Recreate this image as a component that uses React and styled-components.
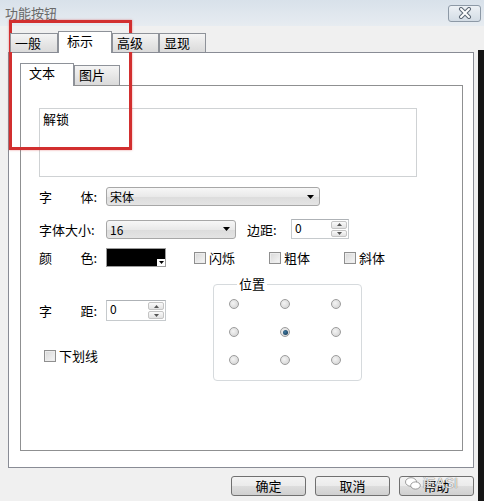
import React from "react";
import styled, { createGlobalStyle } from "styled-components";

const GlobalStyle = createGlobalStyle`
  html, body {
    margin: 0;
    padding: 0;
    background: #f0f0f0;
  }
  body {
    font-family: "Noto Sans CJK SC", "DejaVu Sans", sans-serif;
    font-size: 13px;
    color: #000;
  }
`;

const Window = styled.div`
  position: relative;
  width: 484px;
  height: 501px;
  overflow: hidden;
  display: flex;
  flex-direction: column;
  background: #f0f0f0;
`;

const TitleBar = styled.div`
  flex: none;
  height: 26px;
  box-sizing: border-box;
  display: flex;
  align-items: center;
  justify-content: space-between;
  padding: 0 3px 0 5px;
  background: linear-gradient(#d8e1ea, #e7ecf1);
  color: #6a6a6a;
`;

const Title = styled.span`
  font-size: 13px;
  line-height: 14px;
`;

const CloseButton = styled.div`
  width: 33px;
  height: 17px;
  box-sizing: border-box;
  border: 1px solid #8d99a6;
  border-radius: 3px;
  background: linear-gradient(#edf1f5, #d3dce5);
  display: flex;
  align-items: center;
  justify-content: center;
`;

const Body = styled.div`
  flex: 1;
  display: flex;
`;

const Main = styled.div`
  width: 478px;
  box-sizing: border-box;
  padding: 5px 4px 0 8px;
  display: flex;
  flex-direction: column;
`;

const Edge = styled.div`
  width: 6px;
  margin-top: 24px;
  background: #151515;
`;

const TabRow = styled.div`
  display: flex;
  align-items: flex-end;
  height: ${(p) => p.$h}px;
  padding-left: ${(p) => p.$pl}px;
`;

const Tab = styled.div`
  position: relative;
  z-index: ${(p) => (p.$active ? 2 : 1)};
  width: ${(p) => p.$w}px;
  height: ${(p) => (p.$active ? p.$h + 1 : p.$h - 2)}px;
  margin-bottom: ${(p) => (p.$active ? -1 : 0)}px;
  box-sizing: border-box;
  padding-left: ${(p) => (p.$active ? 8 : 4)}px;
  border: 1px solid #8e9299;
  border-bottom: none;
  background: ${(p) => (p.$active ? "#fff" : "linear-gradient(#f4f4f4, #dadada)")};
  line-height: ${(p) => (p.$active ? 18 : 17)}px;
  font-size: 13px;
`;

const OuterPanel = styled.div`
  width: 466px;
  height: 416px;
  box-sizing: border-box;
  border: 1px solid #898c95;
  background: #fff;
  padding: 10px 0 0 11px;
`;

const InnerPanel = styled.div`
  width: 443px;
  height: 366px;
  box-sizing: border-box;
  border: 1px solid #8f9091;
  background: #fff;
  padding: 22px 0 0 18px;
`;

const TextBox = styled.div`
  width: 378px;
  height: 69px;
  box-sizing: border-box;
  border: 1px solid #cfd2d4;
  padding: 2px 3px;
  line-height: 16px;
`;

const FormRow = styled.div`
  display: flex;
  align-items: center;
  margin-top: ${(p) => p.$mt}px;
`;

const Label = styled.div`
  width: ${(p) => p.$w || 58}px;
  display: flex;
  justify-content: space-between;
  white-space: nowrap;
  margin-left: ${(p) => p.$ml || 0}px;
`;

const Select = styled.div`
  width: ${(p) => p.$w}px;
  height: 19px;
  margin-left: 9px;
  box-sizing: border-box;
  border: 1px solid #a7a7a7;
  border-radius: 3px;
  background: linear-gradient(#f7f7f7, #e9e9e9 50%, #dcdcdc 51%, #e4e4e4);
  display: flex;
  align-items: center;
  justify-content: space-between;
  padding: 0 5px 0 3px;
  font-size: 12px;
`;

const Spin = styled.div`
  width: ${(p) => p.$w}px;
  height: ${(p) => p.$h}px;
  margin-left: ${(p) => p.$ml}px;
  box-sizing: border-box;
  border: 1px solid #c6cacd;
  border-top-color: #aeb2b6;
  background: #fff;
  display: flex;
`;

const SpinValue = styled.div`
  flex: 1;
  padding-left: 3px;
  font-size: 12px;
  line-height: 15px;
`;

const SpinButtons = styled.div`
  width: 16px;
  display: flex;
  flex-direction: column;
  padding: 1px;
  gap: 1px;
`;

const SpinBtn = styled.div`
  flex: 1;
  border: 1px solid #c4c4c4;
  border-radius: 2px;
  background: linear-gradient(#fafafa, #e2e2e2);
  display: flex;
  align-items: center;
  justify-content: center;
`;

const Swatch = styled.div`
  position: relative;
  width: 60px;
  height: 19px;
  margin-left: 9px;
  box-sizing: border-box;
  border: 1px solid #9c9c9c;
  background: #000;
`;

const SwatchArrow = styled.div`
  position: absolute;
  right: 0;
  bottom: 0;
  width: 8px;
  height: 7px;
  background: #fff;
  display: flex;
  align-items: center;
  justify-content: center;
`;

const CheckItem = styled.div`
  display: flex;
  align-items: center;
  gap: 3px;
  width: ${(p) => p.$w || "auto"};
  margin-left: ${(p) => p.$ml || 0}px;
  margin-top: ${(p) => p.$mt || 0}px;
`;

const Box = styled.span`
  width: 12px;
  height: 12px;
  box-sizing: border-box;
  border: 1px solid #8f8f8f;
  background: linear-gradient(135deg, #d7d7d7, #f6f6f6);
  box-shadow: inset 0 0 0 1px #ececec;
`;

const Lower = styled.div`
  display: flex;
  align-items: flex-start;
  margin-top: 10px;
`;

const LeftCol = styled.div`
  width: 174px;
  padding-top: 23px;
`;

const Group = styled.fieldset`
  width: 149px;
  height: 104px;
  box-sizing: border-box;
  margin: 0;
  padding: 8px 0 0 15px;
  border: 1px solid #d6dadd;
  border-radius: 4px;
`;

const Legend = styled.legend`
  margin-left: 8px;
  padding: 0 2px;
  line-height: 14px;
  font-size: 13px;
`;

const RadioGrid = styled.div`
  display: grid;
  grid-template-columns: repeat(3, 10px);
  column-gap: 41px;
  row-gap: 18px;
`;

const Radio = styled.span`
  width: 10px;
  height: 10px;
  box-sizing: border-box;
  border-radius: 50%;
  border: 1px solid #9c9c9c;
  background: radial-gradient(circle at 40% 40%, #f4f4f4, #cfcfcf);
  display: flex;
  align-items: center;
  justify-content: center;
  &::after {
    content: "";
    display: ${(p) => (p.$on ? "block" : "none")};
    width: 5px;
    height: 5px;
    border-radius: 50%;
    background: radial-gradient(circle at 40% 40%, #3f7aa3, #0f2f48);
  }
`;

const ButtonRow = styled.div`
  display: flex;
  justify-content: flex-end;
  gap: 9px;
  margin-top: 8px;
`;

const Button = styled.div`
  width: 75px;
  height: 20px;
  box-sizing: border-box;
  border: 1px solid #707070;
  border-radius: 3px;
  background: linear-gradient(#f3f3f3, #ebebeb 50%, #dddddd 51%, #d0d0d0);
  text-align: center;
  line-height: 17px;
  font-size: 13px;
`;

const Highlight = styled.div`
  position: absolute;
  left: 9px;
  top: 20px;
  width: 123px;
  height: 130px;
  box-sizing: border-box;
  border: 3px solid #d22f2f;
  box-shadow: 0 0 2px rgba(210, 40, 40, 0.5);
  pointer-events: none;
`;

const Watermark = styled.div`
  position: absolute;
  left: 405px;
  top: 475px;
  display: flex;
  align-items: center;
  gap: 2px;
  color: rgba(255, 255, 255, 0.85);
  font-family: "Liberation Sans", sans-serif;
  font-size: 14px;
  text-shadow: 0 0 1px #777, 0 0 1px #777;
  pointer-events: none;
`;

const Down = () => (
  <svg width="7" height="4" viewBox="0 0 7 4">
    <path d="M0 0h7L3.5 4z" fill="#000" />
  </svg>
);

const Tiny = ({ up }) => (
  <svg width="5" height="3" viewBox="0 0 5 3">
    <path d={up ? "M0 3h5L2.5 0z" : "M0 0h5L2.5 3z"} fill="#555" />
  </svg>
);

function SpinBox({ w, h, ml }) {
  return (
    <Spin $w={w} $h={h} $ml={ml}>
      <SpinValue>0</SpinValue>
      <SpinButtons>
        <SpinBtn><Tiny up /></SpinBtn>
        <SpinBtn><Tiny /></SpinBtn>
      </SpinButtons>
    </Spin>
  );
}

const outerTabs = [
  { t: "一般", w: 48 },
  { t: "标示", w: 54, active: true },
  { t: "高级", w: 47 },
  { t: "显现", w: 47 },
];

export default function App() {
  return (
    <Window>
      <GlobalStyle />
      <TitleBar>
        <Title>功能按钮</Title>
        <CloseButton>
          <svg width="16" height="12" viewBox="0 0 16 12">
            <path d="M4 2l8 8M12 2l-8 8" stroke="#5d6875" strokeWidth="4" strokeLinecap="round" />
            <path d="M4 2l8 8M12 2l-8 8" stroke="#fff" strokeWidth="2" strokeLinecap="round" />
          </svg>
        </CloseButton>
      </TitleBar>
      <Body>
        <Main>
          <TabRow $h={21} $pl={2}>
            {outerTabs.map((tab) => (
              <Tab key={tab.t} $w={tab.w} $h={21} $active={tab.active}>
                {tab.t}
              </Tab>
            ))}
          </TabRow>
          <OuterPanel>
            <TabRow $h={22} $pl={0}>
              <Tab $w={54} $h={22} $active>文本</Tab>
              <Tab $w={46} $h={22}>图片</Tab>
            </TabRow>
            <InnerPanel>
              <TextBox>解锁</TextBox>

              <FormRow $mt={10}>
                <Label><span>字</span><span>体:</span></Label>
                <Select $w={214}>
                  <span>宋体</span>
                  <Down />
                </Select>
              </FormRow>

              <FormRow $mt={13}>
                <Label><span>字体大小:</span></Label>
                <Select $w={130}>
                  <span>16</span>
                  <Down />
                </Select>
                <Label $w={44} $ml={11}><span>边距:</span></Label>
                <SpinBox w={58} h={20} ml={0} />
              </FormRow>

              <FormRow $mt={9}>
                <Label><span>颜</span><span>色:</span></Label>
                <Swatch>
                  <SwatchArrow>
                    <svg width="5" height="3" viewBox="0 0 5 3">
                      <path d="M0 0h5L2.5 3z" fill="#000" />
                    </svg>
                  </SwatchArrow>
                </Swatch>
                <CheckItem $w="75px" $ml={28}><Box />闪烁</CheckItem>
                <CheckItem $w="75px"><Box />粗体</CheckItem>
                <CheckItem><Box />斜体</CheckItem>
              </FormRow>

              <Lower>
                <LeftCol>
                  <FormRow $mt={0}>
                    <Label><span>字</span><span>距:</span></Label>
                    <SpinBox w={60} h={21} ml={9} />
                  </FormRow>
                  <CheckItem $ml={5} $mt={25}><Box />下划线</CheckItem>
                </LeftCol>
                <Group>
                  <Legend>位置</Legend>
                  <RadioGrid>
                    {Array.from({ length: 9 }).map((_, i) => (
                      <Radio key={i} $on={i === 4} />
                    ))}
                  </RadioGrid>
                </Group>
              </Lower>
            </InnerPanel>
          </OuterPanel>
          <ButtonRow>
            <Button>确定</Button>
            <Button>取消</Button>
            <Button>帮助</Button>
          </ButtonRow>
        </Main>
        <Edge />
      </Body>
      <Highlight />
      <Watermark>
        <svg width="16" height="13" viewBox="0 0 16 13">
          <ellipse cx="6" cy="5" rx="5.5" ry="4.3" fill="#fff" stroke="#888" strokeWidth="0.8" />
          <ellipse cx="10.5" cy="8.5" rx="4.8" ry="3.6" fill="#fff" stroke="#888" strokeWidth="0.8" />
        </svg>
        <span>iEASI</span>
      </Watermark>
    </Window>
  );
}
